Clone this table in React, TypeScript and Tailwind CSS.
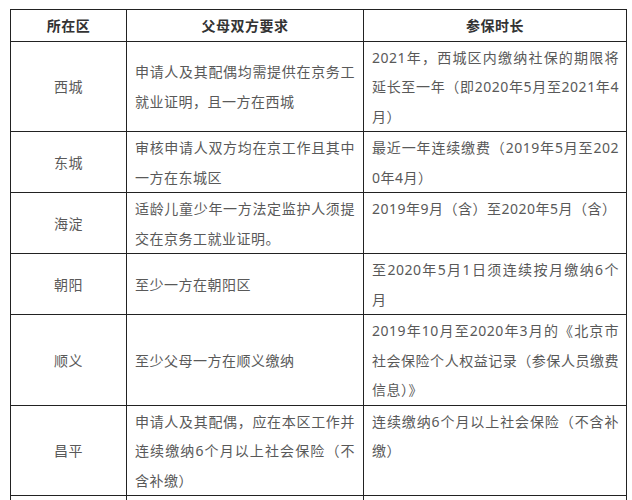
type Row = {
  qu: string
  yaoqiu: string
  shichang: string
}

const rows: Row[] = [
  {
    qu: "西城",
    yaoqiu: "申请人及其配偶均需提供在京务工就业证明，且一方在西城",
    shichang: "2021年，西城区内缴纳社保的期限将延长至一年（即2020年5月至2021年4月）",
  },
  {
    qu: "东城",
    yaoqiu: "审核申请人双方均在京工作且其中一方在东城区",
    shichang: "最近一年连续缴费（2019年5月至2020年4月）",
  },
  {
    qu: "海淀",
    yaoqiu: "适龄儿童少年一方法定监护人须提交在京务工就业证明。",
    shichang: "2019年9月（含）至2020年5月（含）",
  },
  {
    qu: "朝阳",
    yaoqiu: "至少一方在朝阳区",
    shichang: "至2020年5月1日须连续按月缴纳6个月",
  },
  {
    qu: "顺义",
    yaoqiu: "至少父母一方在顺义缴纳",
    shichang:
      "2019年10月至2020年3月的《北京市社会保险个人权益记录（参保人员缴费信息）》",
  },
  {
    qu: "昌平",
    yaoqiu: "申请人及其配偶，应在本区工作并连续缴纳6个月以上社会保险（不含补缴）",
    shichang: "连续缴纳6个月以上社会保险（不含补缴）",
  },
]

// 数字用 Noto Sans（比思源黑体的数字宽一点，断行才对得上）
const cell = "border border-[#222] pl-2 pt-[1px] pb-0 leading-[29.5px]"

export default function App() {
  return (
    <div className="h-[500px] w-[632px] overflow-hidden bg-white pl-[10px] pt-[9px] font-['Noto_Sans','Noto_Sans_CJK_SC',sans-serif] text-[14px] tracking-[0.5px] text-[#595959]">
      <table className="w-[616px] table-fixed border-collapse">
        <colgroup>
          <col className="w-[116px]" />
          <col className="w-[237px]" />
          <col className="w-[263px]" />
        </colgroup>
        <thead>
          <tr className="font-bold text-[#333]">
            <th className={`${cell} pr-2 text-center align-middle`}>所在区</th>
            <th className={`${cell} pr-2 text-center align-middle`}>父母双方要求</th>
            <th className={`${cell} pr-2 text-center align-middle`}>参保时长</th>
          </tr>
        </thead>
        <tbody>
          {rows.map((r) => (
            <tr key={r.qu}>
              <td className={`${cell} pr-2 text-center align-middle`}>{r.qu}</td>
              <td className={`${cell} pr-2 break-all text-justify align-middle`}>
                {r.yaoqiu}
              </td>
              <td className={`${cell} pr-[7px] break-all text-justify align-top`}>
                {r.shichang}
              </td>
            </tr>
          ))}
          <tr>
            <td className={`${cell} h-[60px]`}></td>
            <td className={cell}></td>
            <td className={cell}></td>
          </tr>
        </tbody>
      </table>
    </div>
  )
}
